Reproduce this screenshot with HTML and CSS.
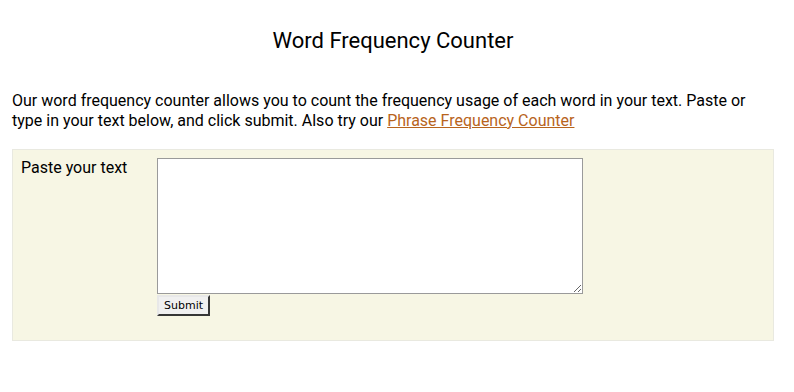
FILE: index.html
```html
<!DOCTYPE html>
<html>
<head>
<meta charset="utf-8">
<link rel="stylesheet" href="styles.css">
</head>
<body>
<div class="page">
  <h1 class="title">Word Frequency Counter</h1>
  <p class="intro">Our word frequency counter allows you to count the frequency usage of each word in your text. Paste or type in your text below, and click submit. Also try our <a href="#" class="link">Phrase Frequency Counter</a></p>
  <form class="panel">
    <label class="label">Paste your text</label>
    <div class="field">
      <textarea class="textarea"></textarea>
      <button type="button" class="submit">Submit</button>
    </div>
  </form>
</div>
</body>
</html>
```
FILE: styles.css
```css
html, body {
  margin: 0;
  padding: 0;
  background: #ffffff;
}
.page {
  padding: 0 20px 0 12px;
  font-family: Roboto, "Liberation Sans", sans-serif;
  color: #000;
}
.title {
  margin: 0;
  padding-top: 28px;
  font-size: 22px;
  line-height: 26px;
  font-weight: 400;
  text-align: center;
}
.intro {
  margin: 37px 0 0;
  font-size: 16px;
  line-height: 20px;
}
.link {
  color: #b8641c;
  text-decoration: underline;
}
.panel {
  margin-top: 18px;
  background: #f7f6e4;
  border: 1px solid #e9e9e0;
  padding: 8px 8px 24px;
  display: grid;
  grid-template-columns: 136px auto;
}
.label {
  font-size: 16px;
  line-height: 20px;
}
.field {
  display: flex;
  flex-direction: column;
  align-items: flex-start;
}
.textarea {
  box-sizing: border-box;
  width: 426px;
  height: 136px;
  margin: 0;
  border: 1px solid #9a9a9a;
  background: #fff;
  display: block;
}
.submit {
  margin: 1px 0 0;
  box-sizing: border-box;
  width: 53px;
  height: 21px;
  padding: 0;
  font-family: "DejaVu Sans", sans-serif;
  font-size: 11px;
  color: #000;
  background: #f0f0f0;
  border: 2px outset #bdbdbd;
  border-top-color: #e8e8e8;
  border-left-color: #e8e8e8;
  border-right-color: #8a8a8a;
  border-bottom-color: #8a8a8a;
}
```
